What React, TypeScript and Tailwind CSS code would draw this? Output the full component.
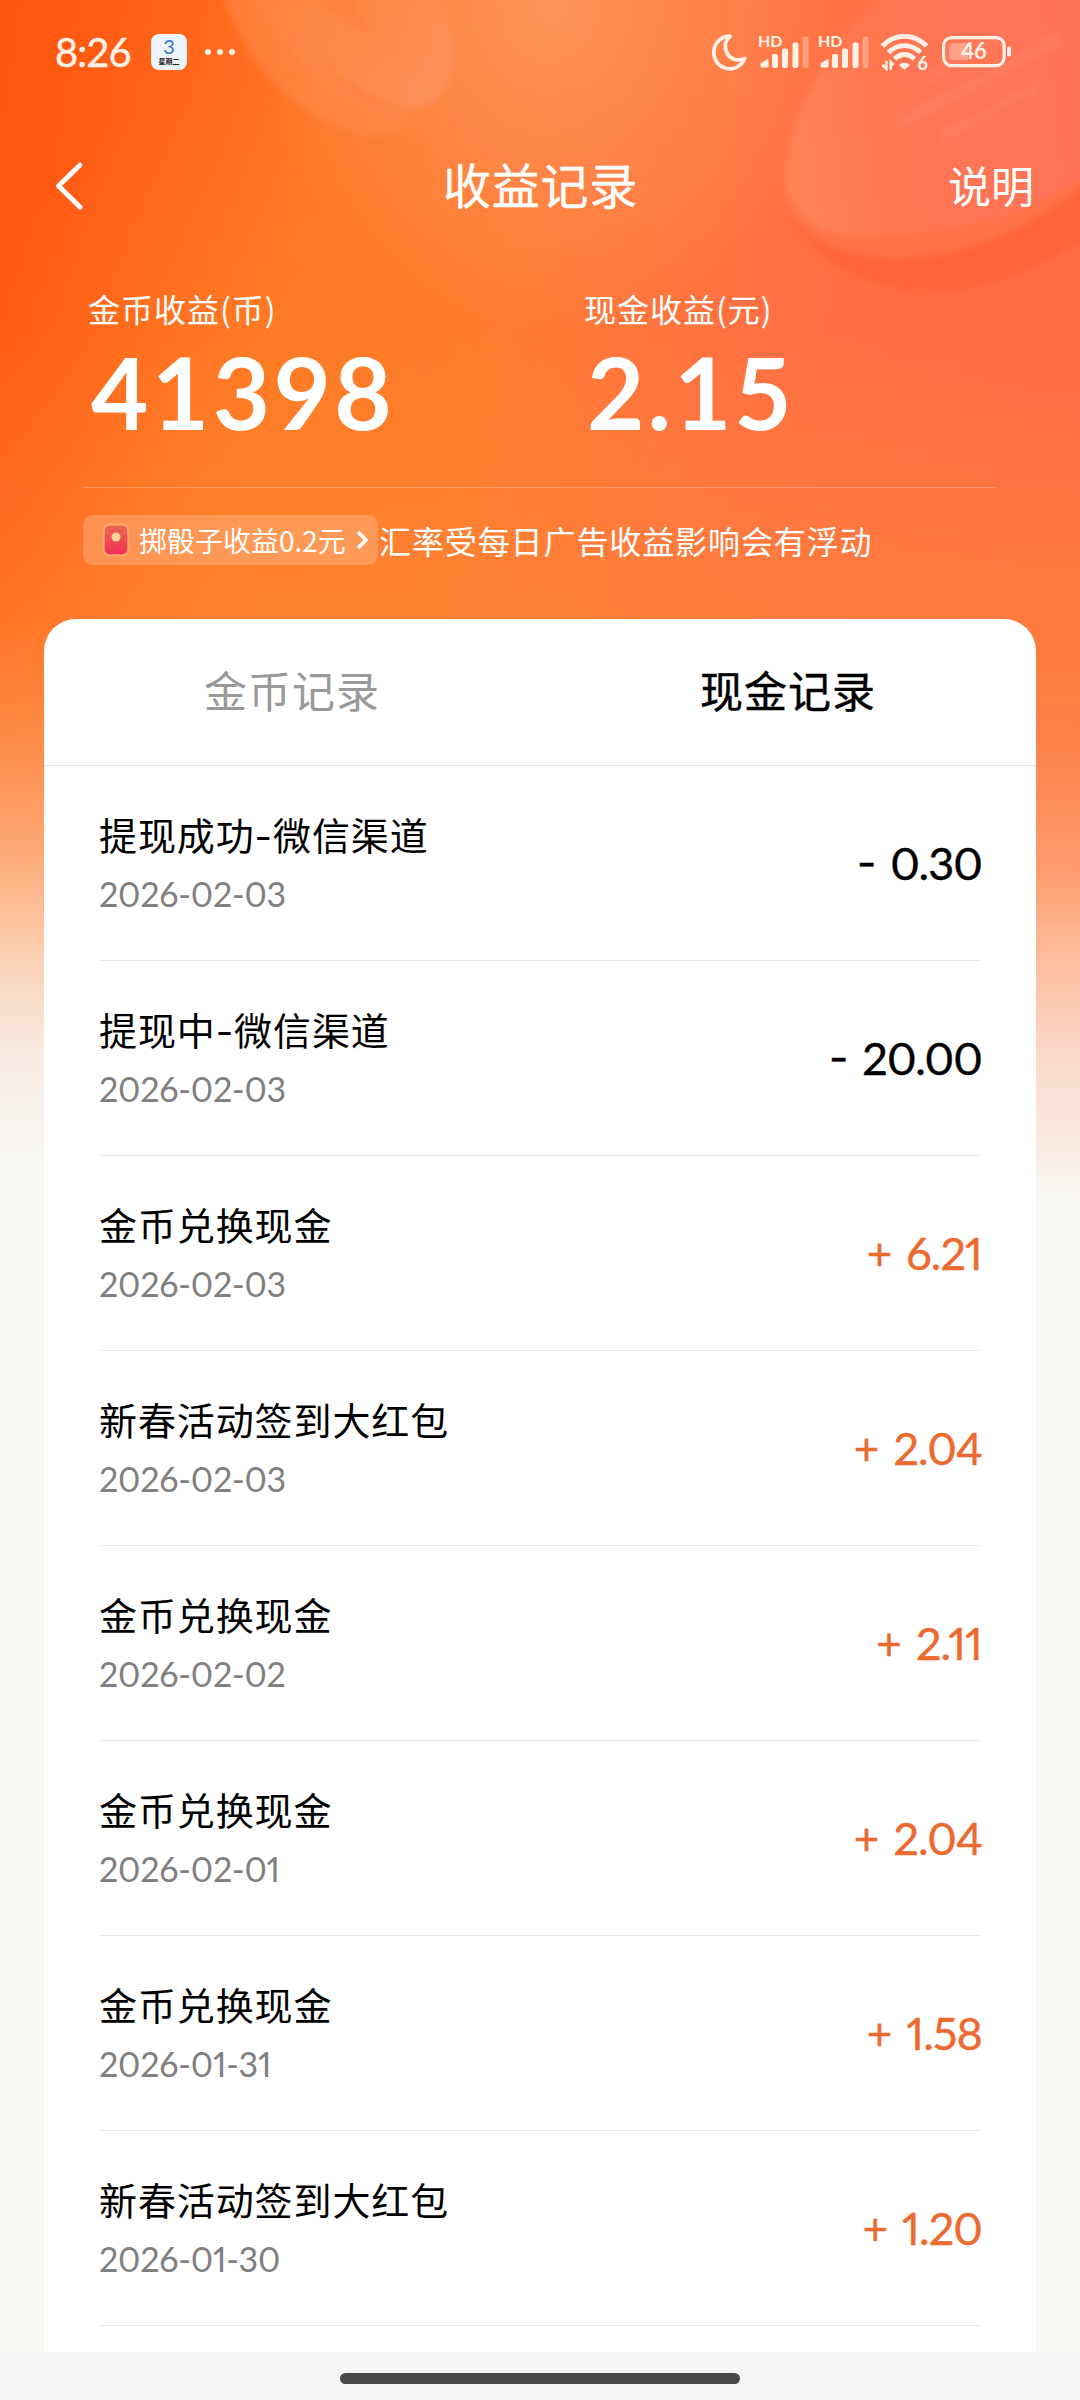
import React from 'react';

interface CashRecord {
  title: string;
  date: string;
  sign: '+' | '-';
  amount: string;
}

const records: CashRecord[] = [
  { title: '提现成功-微信渠道', date: '2026-02-03', sign: '-', amount: '0.30' },
  { title: '提现中-微信渠道', date: '2026-02-03', sign: '-', amount: '20.00' },
  { title: '金币兑换现金', date: '2026-02-03', sign: '+', amount: '6.21' },
  { title: '新春活动签到大红包', date: '2026-02-03', sign: '+', amount: '2.04' },
  { title: '金币兑换现金', date: '2026-02-02', sign: '+', amount: '2.11' },
  { title: '金币兑换现金', date: '2026-02-01', sign: '+', amount: '2.04' },
  { title: '金币兑换现金', date: '2026-01-31', sign: '+', amount: '1.58' },
  { title: '新春活动签到大红包', date: '2026-01-30', sign: '+', amount: '1.20' },
];

// Orange wash with the two translucent coins behind the header
const Backdrop: React.FC = () => (
  <svg className="absolute inset-0" width="1080" height="1200" viewBox="0 0 1080 1200" fill="none">
    <defs>
      <linearGradient id="base" x1="0" y1="0" x2="1080" y2="160" gradientUnits="userSpaceOnUse">
        <stop offset="0" stopColor="#ff560f" />
        <stop offset="0.1" stopColor="#ff5c14" />
        <stop offset="0.3" stopColor="#ff7628" />
        <stop offset="0.5" stopColor="#ff7a34" />
        <stop offset="0.75" stopColor="#ff7043" />
        <stop offset="1" stopColor="#ff6c46" />
      </linearGradient>
      <radialGradient id="glow" cx="0" cy="0" r="1" gradientUnits="userSpaceOnUse" gradientTransform="translate(550 0) scale(300 330)">
        <stop stopColor="#ff9a62" stopOpacity="0.8" />
        <stop offset="1" stopColor="#ff9a62" stopOpacity="0" />
      </radialGradient>
      <radialGradient id="amber" cx="0" cy="0" r="1" gradientUnits="userSpaceOnUse" gradientTransform="translate(290 480) scale(330 420)">
        <stop stopColor="#ff7e22" stopOpacity="0.85" />
        <stop offset="1" stopColor="#ff7e22" stopOpacity="0" />
      </radialGradient>
      <linearGradient id="warm" x1="0" y1="330" x2="0" y2="640" gradientUnits="userSpaceOnUse">
        <stop stopColor="#ff8638" stopOpacity="0" />
        <stop offset="1" stopColor="#ff8638" stopOpacity="0.6" />
      </linearGradient>
      <linearGradient id="fadeLeft" x1="0" y1="619" x2="0" y2="1160" gradientUnits="userSpaceOnUse">
        <stop stopColor="#ff8a3c" stopOpacity="0" />
        <stop offset="0.26" stopColor="#ff9050" />
        <stop offset="0.44" stopColor="#fdab78" />
        <stop offset="0.64" stopColor="#fad3b8" />
        <stop offset="0.81" stopColor="#f7ece4" />
        <stop offset="1" stopColor="#f8f7f3" />
      </linearGradient>
      <linearGradient id="fadeRight" x1="0" y1="619" x2="0" y2="1200" gradientUnits="userSpaceOnUse">
        <stop stopColor="#ff7b40" stopOpacity="0" />
        <stop offset="0.25" stopColor="#ff8750" />
        <stop offset="0.42" stopColor="#ff9a6c" />
        <stop offset="0.6" stopColor="#fdc0a2" />
        <stop offset="0.78" stopColor="#fadccf" />
        <stop offset="1" stopColor="#f8f7f3" />
      </linearGradient>
      <linearGradient id="coinA" x1="250" y1="0" x2="430" y2="110" gradientUnits="userSpaceOnUse">
        <stop stopColor="#ff8a45" stopOpacity="0.3" />
        <stop offset="1" stopColor="#ff9460" stopOpacity="0.7" />
      </linearGradient>
      <linearGradient id="coinB" x1="780" y1="160" x2="1080" y2="120" gradientUnits="userSpaceOnUse">
        <stop stopColor="#ff8456" />
        <stop offset="0.35" stopColor="#ff7650" />
        <stop offset="1" stopColor="#ff725a" />
      </linearGradient>
      <filter id="soft" x="-20%" y="-20%" width="140%" height="140%">
        <feGaussianBlur stdDeviation="3.5" />
      </filter>
    </defs>
    <rect width="1080" height="1200" fill="url(#base)" />
    <rect width="1080" height="1200" fill="url(#amber)" />
    <rect width="1080" height="1200" fill="url(#glow)" />
    <rect width="1080" height="1200" fill="url(#warm)" />
    <g filter="url(#soft)">
      <path d="M222 -10C240 60 300 120 360 135C390 140 405 128 412 118L440 90L300 -10Z" fill="#ff8a4c" fillOpacity="0.55" />
      <path d="M250 -10C285 60 340 105 400 110C440 110 452 90 455 50L440 -10Z" fill="url(#coinA)" />
      <path d="M315 50C345 85 375 102 415 108C380 112 330 90 315 50Z" fill="#ff7428" fillOpacity="0.45" />
      <path d="M310 -10L370 36L345 -10Z" fill="#ff7a3c" fillOpacity="0.5" />
      <path d="M880 -10C820 50 780 120 784 190C790 240 850 292 930 292C1000 290 1050 260 1090 235V-10Z" fill="#ff6236" fillOpacity="0.75" />
      <path d="M880 -10C815 50 780 120 784 185C790 235 830 258 900 258C980 256 1040 220 1090 180V-10Z" fill="#ff7246" />
      <path d="M890 -10C825 50 785 120 785 180C790 225 830 240 880 236C980 230 1040 210 1090 170V-10Z" fill="url(#coinB)" />
      <path d="M895 120L1060 32L1062 44L895 130Z" fill="#ff8268" fillOpacity="0.6" />
      <path d="M940 132L1038 80L1040 92L945 142Z" fill="#ff8268" fillOpacity="0.6" />
      <path d="M915 82L1015 18L1012 34L920 88Z" fill="#ff8268" fillOpacity="0.5" />
    </g>
    <rect y="619" width="44" height="581" fill="url(#fadeLeft)" />
    <rect x="1036" y="619" width="44" height="581" fill="url(#fadeRight)" />
  </svg>
);

const MoonIcon: React.FC = () => (
  <svg width="35" height="37" viewBox="0 0 35 37" fill="none" stroke="currentColor" strokeWidth="3.8" strokeLinejoin="round">
    <path d="M18 2.2A16 16.3 0 1 0 32.6 24.6C24.5 28 17 24.5 14.3 17.5C12.3 12 13.5 6 18 2.2Z" />
  </svg>
);

const SignalIcon: React.FC = () => (
  <div className="relative h-[34px] w-[50px]">
    <svg width="50" height="34" viewBox="0 0 50 34" fill="currentColor">
      <path d="M2 32V28.5L9 24.5V32Z" stroke="currentColor" strokeLinejoin="round" />
      <rect x="13" y="19" width="6" height="14" rx="2" />
      <rect x="23" y="13.5" width="6" height="19.5" rx="2" />
      <rect x="33.5" y="7.5" width="6" height="25.5" rx="2" />
      <rect x="43.5" y="1.5" width="6" height="31.5" rx="2" opacity="0.35" />
    </svg>
    <span className="absolute -left-px -top-[4px] font-['Lato'] text-[16px] font-bold leading-[20px]">HD</span>
  </div>
);

const WifiIcon: React.FC = () => (
  <div className="relative h-[37px] w-[47px]">
    <svg width="47" height="37" viewBox="0 0 47 37" fill="none" stroke="currentColor" strokeWidth="4.8">
      <path d="M1.5 12C14 -1 33 -1 45.5 12" />
      <path d="M7.5 18.5C16.5 9.3 30.5 9.3 39.5 18.5" />
      <path d="M13.5 25C19.5 19 27.5 19 33.5 25" />
      <path d="M18 31C21.3 28 25.7 28 29 31L23.5 36Z" fill="currentColor" stroke="none" />
      <path d="M5.4 27V35L1.4 31M9.8 36V28L12.6 31" strokeWidth="2.6" />
    </svg>
    <span className="absolute right-0 top-[18px] font-['Lato'] text-[18px] font-black leading-[22px]">6</span>
  </div>
);

const BatteryIcon: React.FC = () => (
  <svg width="71" height="32" viewBox="0 0 71 32" fill="none">
    <rect x="1.6" y="1.6" width="60.5" height="28" rx="8" stroke="currentColor" strokeWidth="3.2" />
    <path d="M10 7H26V24H10C8 24 7 22.5 7 20V11C7 8.5 8 7 10 7Z" fill="currentColor" fillOpacity="0.35" />
    <rect x="65" y="10.5" width="4" height="10" rx="2" fill="currentColor" />
    <text x="32" y="23.3" fontSize="22" fontWeight="700" fontFamily="Lato" textAnchor="middle" fill="currentColor">46</text>
  </svg>
);

const StatusBar: React.FC = () => (
  <div className="flex h-[104px] items-center pl-[55px] pr-[67px] text-[#fff1e6]">
    <span className="w-[96px] font-['Lato'] text-[40px] leading-none tracking-[-1px] [-webkit-text-stroke:0.4px]">8:26</span>
    <div className="flex h-[36px] w-[36px] flex-col items-center rounded-[8px] bg-[#eef3f9]">
      <span className="font-['Lato'] text-[20px] leading-[24px] text-[#3a78cc]">3</span>
      <span className="font-['Noto_Sans_CJK_SC',sans-serif] text-[7px] font-bold leading-[7px] text-[#222]">星期二</span>
    </div>
    <div className="ml-[18px] flex gap-[6px]">
      <i className="h-[6px] w-[6px] rounded-full bg-current" />
      <i className="h-[6px] w-[6px] rounded-full bg-current" />
      <i className="h-[6px] w-[6px] rounded-full bg-current" />
    </div>
    <div className="ml-auto flex items-center">
      <MoonIcon />
      <div className="ml-[12px] flex gap-[10px]">
        <SignalIcon />
        <SignalIcon />
      </div>
      <div className="ml-[12px]">
        <WifiIcon />
      </div>
      <div className="ml-[14px]">
        <BatteryIcon />
      </div>
    </div>
  </div>
);

const NavBar: React.FC = () => (
  <div className="grid h-[164px] grid-cols-[1fr_auto_1fr] items-center pl-[54px] pr-[46px] text-white">
    <svg width="30" height="50" viewBox="0 0 30 50" fill="none" stroke="currentColor" strokeWidth="4.8" strokeLinecap="round" strokeLinejoin="round">
      <path d="M26 4L4.5 25L26 46" />
    </svg>
    <h1 className="-ml-[7px] pb-[6px] text-[48px] leading-none tracking-[0.8px] [-webkit-text-stroke:0.4px]">收益记录</h1>
    <button className="justify-self-end pb-[3px] text-[43px] leading-none">说明</button>
  </div>
);

const EnvelopeIcon: React.FC = () => (
  <svg width="28" height="34" viewBox="0 0 28 34">
    <defs>
      <linearGradient id="packet" x1="0" y1="0" x2="0" y2="1">
        <stop stopColor="#ec6450" />
        <stop offset="1" stopColor="#f52e58" />
      </linearGradient>
    </defs>
    <rect x="1.5" y="1.5" width="25" height="31" rx="6" fill="url(#packet)" stroke="#ffa468" strokeWidth="2.5" />
    <path d="M3 8C8 14 20 14 25 8" fill="none" stroke="#f2805c" strokeOpacity="0.6" />
    <circle cx="14" cy="14" r="4.5" fill="#ffd29a" />
  </svg>
);

const Summary: React.FC = () => (
  <div className="h-[351px] px-[83px] text-white">
    <div className="flex pl-[5px] pt-[20px]">
      <div className="w-[496px]">
        <div className="text-[32px] leading-[40px] tracking-[1px]">金币收益(币)</div>
        <div className="mt-[10px] pl-[3px] font-['Lato'] text-[99px] font-bold leading-[108px] tracking-[3.4px]">41398</div>
      </div>
      <div>
        <div className="text-[32px] leading-[40px] tracking-[1px]">现金收益(元)</div>
        <div className="mt-[10px] pl-[3px] font-['Lato'] text-[99px] font-bold leading-[108px] tracking-[3px]">2.15</div>
      </div>
    </div>
    <div className="mt-[41px] h-px bg-white/25" />
    <div className="mt-[27px] flex items-center whitespace-nowrap">
      <div className="flex h-[50px] w-[295px] items-center rounded-[10px] bg-white/20 pl-[19px]">
        <EnvelopeIcon />
        <span className="ml-[9px] text-[28px] leading-none">掷骰子收益0.2元</span>
        <svg className="ml-[9px]" width="14" height="20" viewBox="0 0 14 20" fill="none" stroke="currentColor" strokeWidth="3.4">
          <path d="M3 2L11 10L3 18" />
        </svg>
      </div>
      <span className="ml-px text-[32px] leading-none tracking-[0.9px]">汇率受每日广告收益影响会有浮动</span>
    </div>
  </div>
);

const RecordRow: React.FC<{ record: CashRecord }> = ({ record }) => (
  <li className="flex h-[195px] items-center justify-between border-b border-[#e8e8e8]">
    <div>
      <div className="font-['Inter','Noto_Sans_CJK_SC',sans-serif] text-[38px] leading-[48px] tracking-[0.9px] text-black">{record.title}</div>
      <div className="mt-[14px] font-['Lato'] text-[34px] leading-[40px] tracking-[-0.2px] text-[#808080] proportional-nums">{record.date}</div>
    </div>
    <div className={`flex items-center text-[45px] leading-none [-webkit-text-stroke:0.4px] ${record.sign === '+' ? 'text-[#ec6a30]' : 'text-black'}`}>
      <span className={record.sign === '+' ? "font-['Lato'] text-[44px]" : "font-['Inter'] text-[42px]"}>{record.sign}</span>
      <span className="-mr-px ml-[14px] font-['Lato'] tracking-[-0.9px] proportional-nums">{record.amount}</span>
    </div>
  </li>
);

const App: React.FC = () => {
  return (
    <div className="relative h-[2400px] w-[1080px] overflow-hidden bg-[#f8f7f3] font-['Noto_Sans_CJK_SC',sans-serif]">
      <Backdrop />
      <div className="relative flex h-full flex-col">
        <StatusBar />
        <NavBar />
        <Summary />
        <main className="mx-[44px] min-h-0 flex-1 overflow-hidden rounded-t-[32px] bg-white">
          <div className="flex h-[147px] items-center border-b border-[#e6e6e6] pb-[5px] text-[43px] leading-none tracking-[1px]">
            <button className="flex-1 text-[#999]">金币记录</button>
            <button className="flex-1 text-black [-webkit-text-stroke:0.4px]">现金记录</button>
          </div>
          <ul className="px-[55px]">
            {records.map((record, i) => (
              <RecordRow key={i} record={record} />
            ))}
          </ul>
        </main>
        <footer className="flex h-[48px] justify-center bg-[#f5f5f5] pt-[21px]">
          <div className="h-[11px] w-[400px] rounded-full bg-[#474747]" />
        </footer>
      </div>
    </div>
  );
};

export default App;
